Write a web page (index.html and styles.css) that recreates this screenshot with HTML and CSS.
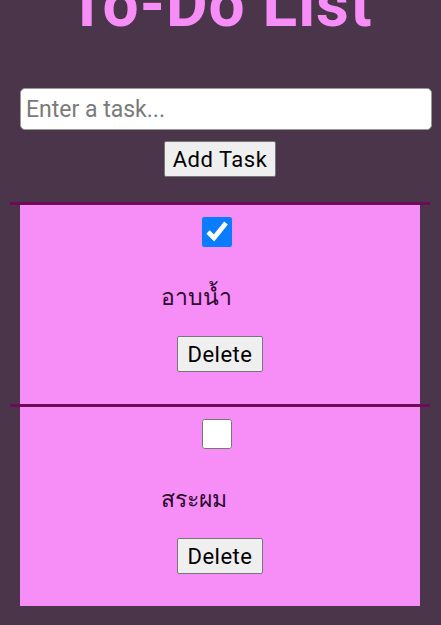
FILE: index.html
```html
<!DOCTYPE html>
<html lang="th">
<head>
<meta charset="utf-8">
<title>To-Do List</title>
<link rel="stylesheet" href="styles.css">
</head>
<body>
<main class="app">
  <h1 class="title">To-Do List</h1>
  <div class="form">
    <input class="task-input" type="text" placeholder="Enter a task...">
    <button class="btn add-btn" type="button">Add Task</button>
  </div>
  <ul class="list">
    <li class="item">
      <div class="item-inner">
        <input class="check" type="checkbox" checked>
        <span class="task-text">อาบน้ำ</span>
        <button class="btn del-btn" type="button">Delete</button>
      </div>
    </li>
    <li class="item">
      <div class="item-inner">
        <input class="check" type="checkbox">
        <span class="task-text">สระผม</span>
        <button class="btn del-btn" type="button">Delete</button>
      </div>
    </li>
  </ul>
</main>
</body>
</html>
```

FILE: styles.css
```css
html, body {
  margin: 0;
  padding: 0;
  background: #4a354b;
  height: 100%;
  overflow: hidden;
}
body {
  font-family: Roboto, "Noto Sans", "DejaVu Sans", sans-serif;
}
.app {
  width: 400px;
  padding: 0 20px;
}
.title {
  margin: -20px 0 0;
  height: 60px;
  font-size: 64px;
  line-height: 50px;
  font-weight: 700;
  color: #f78ef7;
  text-align: center;
  letter-spacing: 1px;
}
.form {
  margin-top: 48px;
  display: flex;
  flex-direction: column;
  align-items: center;
}
.task-input {
  align-self: flex-start;
  width: 400px;
  height: 30px;
  padding: 5px;
  border: 1px solid #9a9a9a;
  border-radius: 5px;
  font-family: inherit;
  font-size: 23px;
  background: #fff;
}
.task-input::placeholder {
  color: #7a7a7a;
}
.btn {
  font-family: inherit;
  font-size: 22px;
  color: #000;
  background: #efefef;
  border: 1px solid #767676;
  border-radius: 2px;
  padding: 0 8px;
  height: 36px;
  letter-spacing: 0.5px;
}
.add-btn {
  margin-top: 11px;
}
.list {
  list-style: none;
  margin: 25px -10px 0;
  padding: 0;
}
.item {
  border-top: 3px solid #6e0a57;
}
.item-inner {
  margin: 0 10px;
  background: #f78ef7;
  height: 199px;
  display: flex;
  flex-direction: column;
  align-items: center;
}
.check {
  width: 30px;
  height: 30px;
  margin: 12px 7px 0 0;
  accent-color: #0a7cff;
}
.task-text {
  width: 118px;
  margin-top: 37px;
  font-size: 23px;
  line-height: 28px;
  color: #2a0a2a;
}
.del-btn {
  margin-top: 24px;
  padding: 0 10px;
}
```
